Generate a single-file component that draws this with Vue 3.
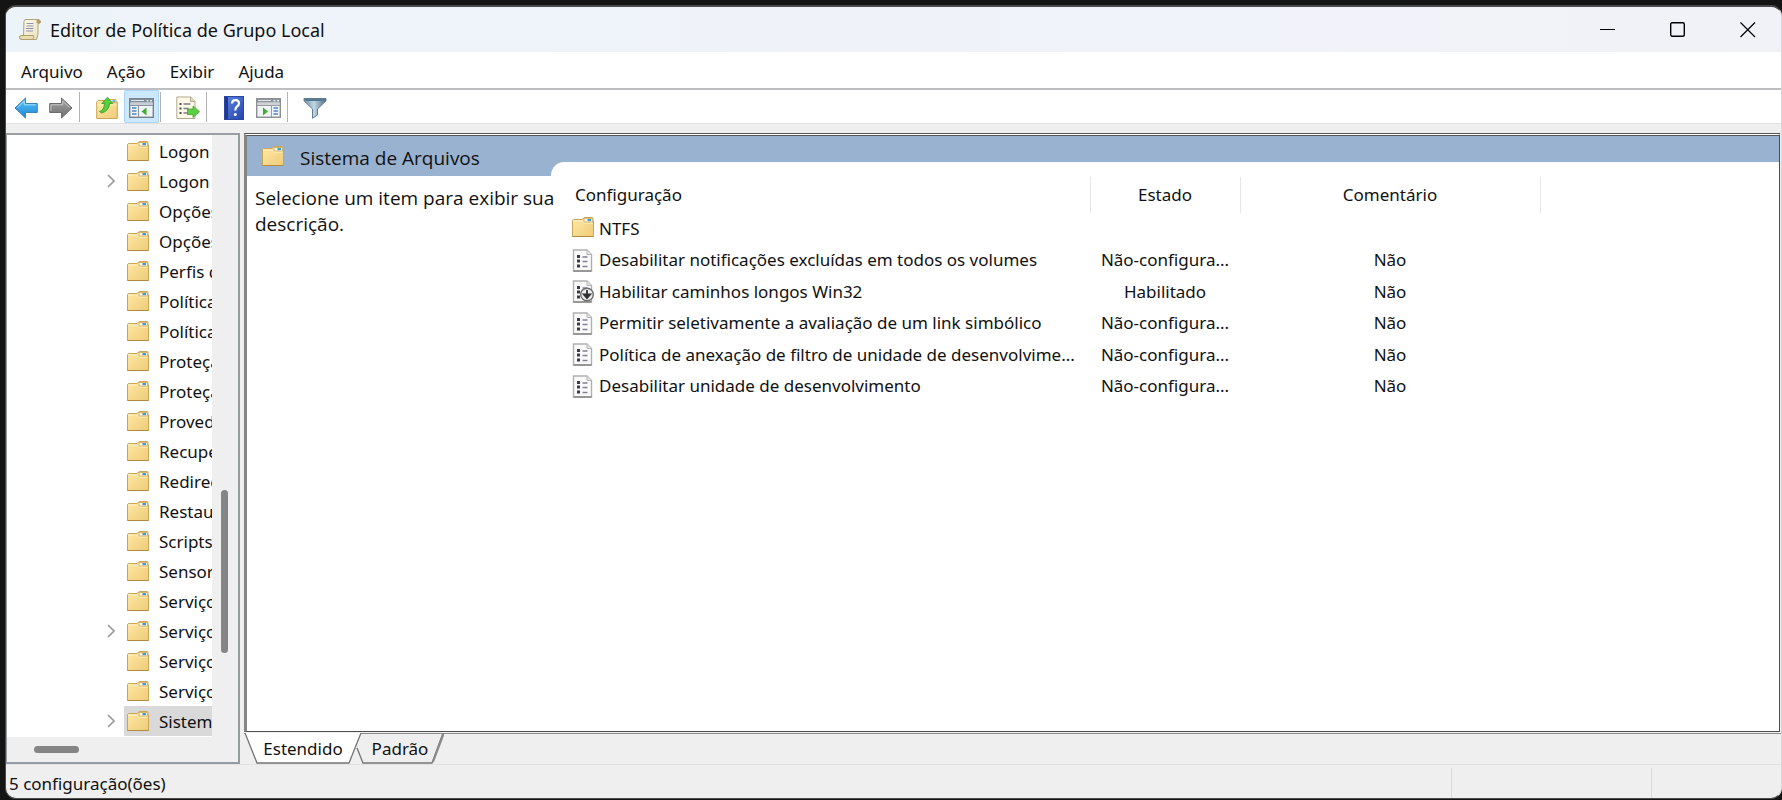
<script setup>
import { ref } from 'vue'

const menus = ['Arquivo', 'Ação', 'Exibir', 'Ajuda']

const tree = [
  { label: 'Logon' },
  { label: 'Logon', open: true },
  { label: 'Opções' },
  { label: 'Opções' },
  { label: 'Perfis de' },
  { label: 'Políticas' },
  { label: 'Políticas' },
  { label: 'Proteção' },
  { label: 'Proteção' },
  { label: 'Provedor' },
  { label: 'Recuperação' },
  { label: 'Redirecionar' },
  { label: 'Restauração' },
  { label: 'Scripts' },
  { label: 'Sensores' },
  { label: 'Serviço' },
  { label: 'Serviço', open: true },
  { label: 'Serviço' },
  { label: 'Serviço' },
  { label: 'Sistema', open: true }
]
const selected = ref(19)

const settings = [
  { name: 'NTFS', icon: 'folder', state: '', comment: '' },
  { name: 'Desabilitar notificações excluídas em todos os volumes', icon: 'page', state: 'Não-configura...', comment: 'Não' },
  { name: 'Habilitar caminhos longos Win32', icon: 'enabled', state: 'Habilitado', comment: 'Não' },
  { name: 'Permitir seletivamente a avaliação de um link simbólico', icon: 'page', state: 'Não-configura...', comment: 'Não' },
  { name: 'Política de anexação de filtro de unidade de desenvolvime...', icon: 'page', state: 'Não-configura...', comment: 'Não' },
  { name: 'Desabilitar unidade de desenvolvimento', icon: 'page', state: 'Não-configura...', comment: 'Não' }
]
</script>

<template>
  <div class="desktop">
    <svg class="defs" width="0" height="0" aria-hidden="true">
      <defs>
        <linearGradient id="gFolder" x1="0" y1="0" x2="1" y2="1">
          <stop offset="0" stop-color="#ffe9a6" /><stop offset="1" stop-color="#efcb78" />
        </linearGradient>
        <linearGradient id="gBlue" x1="0" y1="0" x2="0" y2="1">
          <stop offset="0" stop-color="#5cc4f5" /><stop offset="1" stop-color="#1c86d6" />
        </linearGradient>
        <linearGradient id="gGray" x1="0" y1="0" x2="0" y2="1">
          <stop offset="0" stop-color="#a4a4a4" /><stop offset="1" stop-color="#6f6f6f" />
        </linearGradient>
        <linearGradient id="gHelp" x1="0" y1="0" x2="1" y2="1">
          <stop offset="0" stop-color="#5f86e0" /><stop offset="1" stop-color="#2343ad" />
        </linearGradient>
        <linearGradient id="gFunnel" x1="0" y1="0" x2="1" y2="0">
          <stop offset="0" stop-color="#6d8ea5" /><stop offset="0.45" stop-color="#c3d6e2" /><stop offset="1" stop-color="#4d6d86" />
        </linearGradient>
        <linearGradient id="gPaper" x1="0" y1="0" x2="1" y2="1">
          <stop offset="0" stop-color="#fffdf4" /><stop offset="1" stop-color="#e9deb8" />
        </linearGradient>
        <symbol id="folder" viewBox="0 0 22 20">
          <path d="M.5 19.500V3.500L1.500 2.500h8.500l1.500-1.500Q12 .5 13 .5h7q1 0 1 1V4h.5v15.500z" fill="url(#gFolder)" stroke="#c9a558" />
          <path d="M1.500 4h8.500l1.500 2h9" fill="none" stroke="#fff1c2" />
          <rect x="12" y="1.500" width="8.500" height="3.500" fill="#fdf6df" stroke="#d0ac5e" stroke-width=".8" />
          <rect x="15.500" y="2" width="3.500" height="2.200" fill="#3f9be0" />
          <path d="M.5 19.500h21" stroke="#b08b40" />
        </symbol>
        <symbol id="page" viewBox="0 0 22 23">
          <path d="M1.500 1h13.500l4.500 4.500V22h-18z" fill="#fafafa" stroke="#b0b0b0" stroke-width="1.400" />
          <path d="M15 1v4.500h4.500" fill="#e4e4e4" stroke="#b5b5b5" />
          <path d="M1.500 22h18" stroke="#858585" stroke-width="1.400" />
          <path d="M5 6h3v3H5zM5 10.500h3v3H5zM5 15.500h3v3H5z" fill="#3c3849" />
          <path d="M10.500 8h5M10.500 12.500h5M10.500 17.500h5" stroke="#837f9c" stroke-width="1.400" />
        </symbol>
        <symbol id="enabled" viewBox="0 0 22 23">
          <use href="#page" width="22" height="23" />
          <circle cx="15" cy="14.500" r="6.300" fill="#ececec" stroke="#6b6b6b" stroke-width="1.400" />
          <path d="M15 10v7M11.800 14.300l3.200 3.700 3.200-3.700z" fill="#303030" stroke="#303030" stroke-width="1.800" />
        </symbol>
      </defs>
    </svg>

    <div class="window">
      <header class="titlebar">
        <svg class="scroll" width="24" height="24" viewBox="0 0 24 24" aria-hidden="true">
          <path d="M6 3.500Q6 1.500 8 1.500h12q2.500 0 2.500 2.500 0 1.500-2.500 1.500v11l-1.500 5H4Q1.500 21.500 1.500 19.500T4 17.500h1.500z" fill="url(#gPaper)" stroke="#b0a278" />
          <path d="M18.500 3q-.5 3 1.500 2.500 2.500 0 2.500-1.500T20.500 1.500Q18.500 1.500 18.500 3z" fill="#b99c62" />
          <path d="M4 17.500h11.500q1 2-1 4H4q-2.500 0-2.500-2t2.500-2z" fill="#e9dcae" stroke="#b19f6b" />
          <path d="M8.500 5.500h7M8.500 8h7M8 10.500h7.500M8 13h7" stroke="#8f93ad" stroke-width="1.200" />
        </svg>
        <h1>Editor de Política de Grupo Local</h1>
        <div class="controls">
          <button aria-label="Minimizar"><svg width="16" height="16" viewBox="0 0 16 16"><path d="M0 7.500h15" stroke="#000" /></svg></button>
          <button aria-label="Maximizar"><svg width="16" height="16" viewBox="0 0 16 16"><rect x=".7" y=".7" width="13.600" height="13.600" rx="1.500" fill="none" stroke="#000" stroke-width="1.400" /></svg></button>
          <button aria-label="Fechar"><svg width="16" height="16" viewBox="0 0 16 16"><path d="M.5.5l14.500 14.500M15 .5L.5 15" stroke="#000" stroke-width="1.200" /></svg></button>
        </div>
      </header>

      <nav class="menubar" aria-label="Menu">
        <button v-for="m in menus" :key="m">{{ m }}</button>
      </nav>

      <div class="toolbar" role="toolbar" aria-label="Ferramentas">
        <button aria-label="Voltar">
          <svg width="24" height="22" viewBox="0 0 24 22"><path d="M1 11L11.500 1v5.500h11.800v9H11.500V21z" fill="url(#gBlue)" stroke="#3a83bd" stroke-linejoin="round" /><path d="M3.500 10.500l6.800-6.300v3.600h11.500" fill="none" stroke="#a6e0fb" /></svg>
        </button>
        <button aria-label="Avançar">
          <svg width="24" height="22" viewBox="0 0 24 22"><path d="M23 11L12.500 1v5.500H.7v9h11.800V21z" fill="url(#gGray)" stroke="#6c6c6c" stroke-linejoin="round" /><path d="M2 14V7.800h11.700V4.200l6.800 6.300" fill="none" stroke="#c4c4c4" /></svg>
        </button>
        <span class="sep"></span>
        <button aria-label="Um nível acima">
          <svg width="22" height="24" viewBox="0 0 22 24"><path d="M.7 22.500V6L2 4.500h7L10.500 6h10.800v16.500z" fill="url(#gFolder)" stroke="#c9a558" /><path d="M1.500 9h19" stroke="#fff0bd" /><path d="M14 3.500h6V6h-6z" fill="#fff" stroke="#d0ac5e" /><path d="M16.500 4.200h2.500v1.500h-2.500z" fill="#3f9be0" /><path d="M3.500 15.500q4.500-1 5-8H5.800L11.500 1.200l5.200 6.300h-3q-.8 7.500-8.200 9.500z" fill="#55cf3a" stroke="#319a26" stroke-width=".8" /></svg>
        </button>
        <button class="active" aria-label="Mostrar árvore" aria-pressed="true">
          <svg width="25" height="20" viewBox="0 0 25 20"><rect x=".7" y=".7" width="23.600" height="18.600" fill="#f1f4f6" stroke="#76818b" stroke-width="1.400" /><path d="M1 1h23v3.500H1z" fill="#818d99" /><path d="M17.500 2h2v1.500h-2zM21 2h2v1.500h-2zM2 2h13v1H2z" fill="#dfe6ec" /><path d="M1 6h23" stroke="#b9c2ca" stroke-width="1.500" /><path d="M9.500 7.500V19M1 7.500h23" stroke="#8a959f" /><path d="M3 10h4.500M3 13h4.500M3 16h4.500" stroke="#4a86c8" stroke-width="1.500" /><path d="M17.500 9.500v8L12.500 13.500z" fill="#3fae2a" /></svg>
        </button>
        <span class="sep"></span>
        <button aria-label="Exportar lista">
          <svg width="24" height="24" viewBox="0 0 24 24"><path d="M.8 1h14l4.200 4.500V22.500H.8z" fill="#fdf9e6" stroke="#b1a98d" /><path d="M14.500 1v4.500H19" fill="#e6dcb8" stroke="#b1a98d" /><path d="M3.500 7h2v2h-2zM3.500 11.500h2v2h-2zM3.500 16h2v2h-2z" fill="#4b4b55" /><path d="M7.500 8h7M7.500 12.500h5M7.500 17h6" stroke="#7d7d88" stroke-width="1.300" /><path d="M11.500 13H17v-3l6.500 5.700-6.500 5.800v-3h-5.500z" fill="#5cd043" stroke="#3fa32d" stroke-width=".8" /></svg>
        </button>
        <span class="sep"></span>
        <button aria-label="Ajuda">
          <svg width="20" height="24" viewBox="0 0 20 24"><rect x=".5" y=".5" width="19" height="23" fill="url(#gHelp)" stroke="#2b479f" /><path d="M1 1h3v22H1z" fill="#20388f" /><path d="M8 7.500q.2-3.300 3.500-3.300t3.500 3q0 2-2 3.300-1.700 1.200-1.700 4" fill="none" stroke="#fff" stroke-width="2.200" /><circle cx="11.300" cy="18.500" r="1.500" fill="#fff" /></svg>
        </button>
        <button aria-label="Mostrar painel de ações">
          <svg width="25" height="20" viewBox="0 0 25 20"><rect x=".7" y=".7" width="23.600" height="18.600" fill="#f1f4f6" stroke="#8c8f94" stroke-width="1.400" /><path d="M1 1h23v3.500H1z" fill="#8d939a" /><path d="M17.500 2h2v1.500h-2zM21 2h2v1.500h-2zM2 2h13v1H2z" fill="#e6e9ec" /><path d="M1 6h23" stroke="#c3c7cb" stroke-width="1.500" /><path d="M15.500 7.500V19M1 7.500h23" stroke="#989da2" /><path d="M17.500 10H22M17.500 13H22M17.500 16H22" stroke="#4a86c8" stroke-width="1.500" /><path d="M7 9.500v8L12 13.500z" fill="#3fae2a" /></svg>
        </button>
        <span class="sep"></span>
        <button aria-label="Filtro">
          <svg width="24" height="22" viewBox="0 0 24 22"><path d="M1 1.500h22v2.300L14.500 12v6L9.500 21.300V12L1 3.800z" fill="url(#gFunnel)" stroke="#5f7d93" stroke-linejoin="round" /><path d="M1.500 2h21L21 4H3z" fill="#54788f" /></svg>
        </button>
      </div>

      <main class="body">
        <aside class="side">
          <div class="tree-row">
            <ul class="tree" role="tree" aria-label="Árvore do console">
              <li v-for="(n, i) in tree" :key="i" role="treeitem" :aria-selected="selected === i">
                <svg v-if="n.open" class="chev" width="8" height="14" viewBox="0 0 8 14"><path d="M1 1l6 6-6 6" fill="none" stroke="#999" stroke-width="1.600" /></svg>
                <span v-else class="chev"></span>
                <button :class="{ on: selected === i }" @click="selected = i">
                  <svg class="fold" width="22" height="20"><use href="#folder" /></svg>
                  <span>{{ n.label }}</span>
                </button>
              </li>
            </ul>
            <div class="vscroll"><div class="vthumb"></div></div>
          </div>
          <div class="hscroll"><div class="hthumb"></div></div>
        </aside>

        <section class="main">
          <div class="pane">
            <div class="info">
              <h2><svg width="22" height="20"><use href="#folder" /></svg><span>Sistema de Arquivos</span></h2>
              <p>Selecione um item para exibir sua descrição.</p>
            </div>
            <div class="listwrap">
              <div class="list">
                <table>
                  <colgroup><col class="c1" /><col class="c2" /><col class="c3" /></colgroup>
                  <thead>
                    <tr><th scope="col">Configuração</th><th scope="col">Estado</th><th scope="col">Comentário</th></tr>
                  </thead>
                  <tbody>
                    <tr v-for="s in settings" :key="s.name">
                      <td>
                        <div class="name">
                          <svg v-if="s.icon === 'folder'" class="fold" width="22" height="20"><use href="#folder" /></svg>
                          <svg v-else width="22" height="23"><use :href="'#' + s.icon" /></svg>
                          <span>{{ s.name }}</span>
                        </div>
                      </td>
                      <td>{{ s.state }}</td>
                      <td>{{ s.comment }}</td>
                    </tr>
                  </tbody>
                </table>
              </div>
            </div>
          </div>
          <div class="tabs" role="tablist">
            <button class="tab first" role="tab" aria-selected="true">
              <svg width="118" height="31" viewBox="0 0 118 31"><path d="M1 0l12 30h92L117 0z" fill="#fff" /><path d="M1 0l12 30h92L117 0" fill="none" stroke="#757575" stroke-width="1.300" /></svg>
              <span>Estendido</span>
            </button>
            <button class="tab second" role="tab" aria-selected="false">
              <svg width="88" height="31" viewBox="0 0 88 31"><path d="M1 15l6 15h69L87 0" fill="none" stroke="#757575" stroke-width="1.300" /><path d="M77 29L88 0" stroke="#8b8b8b" stroke-width="2" /></svg>
              <span>Padrão</span>
            </button>
          </div>
        </section>
      </main>

      <footer class="status">
        <span class="msg">5 configuração(ões)</span><span class="cell wide"></span><span class="cell"></span>
      </footer>
    </div>
  </div>
</template>

<style>
body {
  margin: 0;
  background: #141414;
}
</style>

<style scoped>
.desktop {
  box-sizing: border-box;
  height: 100vh;
  padding: 5px 0 1px 5px;
  background: #141414;
  font-family: "Noto Sans", "Open Sans", sans-serif;
  font-size: 17px;
  line-height: 24px;
  color: #111;
}
.defs { position: absolute; }
button {
  font: inherit;
  color: inherit;
  background: none;
  border: 0;
  padding: 0;
  margin: 0;
}
svg { display: block; flex: none; }
.window {
  box-sizing: border-box;
  height: 100%;
  display: flex;
  flex-direction: column;
  background: #efefef;
  border: 1px solid #4a4a4a;
  border-top-width: 2px;
  border-right-color: #d8d8d8;
  border-radius: 11px;
  overflow: hidden;
}
.titlebar {
  flex: none;
  height: 45px;
  display: flex;
  align-items: center;
  background: linear-gradient(90deg, #edf4f9, #eff3f9 50%, #f1f2f8);
}
.scroll { margin: 0 8px 0 12px; }
.titlebar h1 {
  margin: 0;
  font-size: 18px;
  font-weight: 400;
  flex: 1;
}
.controls { display: flex; margin-right: -2px; }
.controls button {
  width: 70px;
  height: 44px;
  display: flex;
  align-items: center;
  justify-content: center;
}
.menubar {
  flex: none;
  height: 36px;
  display: flex;
  align-items: center;
  gap: 24px;
  padding: 3px 15px 0;
  box-sizing: border-box;
  background: #fff;
}
.toolbar {
  flex: none;
  height: 36px;
  box-sizing: border-box;
  display: flex;
  align-items: center;
  padding: 0 2px;
  background: #fff;
  border-top: 2px solid #bdbdc2;
  border-bottom: 1px solid #e2e2e2;
}
.toolbar button {
  width: 35px;
  height: 33px;
  box-sizing: border-box;
  padding-top: 3px;
  display: flex;
  align-items: center;
  justify-content: center;
}
.toolbar .active {
  background: #cce8ff;
  box-shadow: inset 0 0 0 1px #a9d6f8;
  border-radius: 2px;
}
.sep {
  width: 1px;
  height: 30px;
  margin: 0 9px 0 1px;
  background: #b4b4b4;
}
.body {
  flex: 1;
  min-height: 0;
  display: flex;
  gap: 4px;
  padding-top: 9px;
}
.side {
  flex: none;
  width: 234px;
  box-sizing: border-box;
  display: flex;
  flex-direction: column;
  background: #efefef;
  border: 2px solid #949ba3;
  border-left-width: 1px;
  border-top-color: #9a9fa6;
}
.tree-row {
  flex: 1;
  min-height: 0;
  display: flex;
}
.tree {
  flex: 1;
  min-width: 0;
  margin: 0;
  padding: 1px 0 0;
  list-style: none;
  background: #fff;
  overflow: hidden;
}
.tree li {
  display: flex;
  align-items: center;
  height: 30px;
}
.chev {
  width: 8px;
  margin: 0 9px 0 100px;
  flex: none;
}
.tree button {
  flex: 1;
  min-width: 0;
  height: 30px;
  box-sizing: border-box;
  display: flex;
  align-items: center;
  gap: 10px;
  padding: 2px 0 0 3px;
  white-space: nowrap;
  overflow: hidden;
}
.tree button.on { background: #d9d9d9; }
.fold { margin-bottom: 3px; }
.vscroll {
  width: 26px;
  box-sizing: border-box;
  padding-right: 1px;
  display: flex;
  justify-content: center;
  align-items: flex-end;
}
.vthumb {
  width: 7px;
  height: 27%;
  margin-bottom: 84px;
  border-radius: 4px;
  background: #858585;
}
.hscroll {
  flex: none;
  height: 25px;
  display: flex;
  align-items: center;
}
.hthumb {
  width: 45px;
  height: 7px;
  margin-left: 27px;
  border-radius: 4px;
  background: #858585;
}
.main {
  flex: 1;
  min-width: 0;
  display: flex;
  flex-direction: column;
}
.pane {
  flex: 1;
  min-height: 0;
  display: flex;
  background: #fff;
  border: 1px solid #4d4d4d;
  border-left: 3px solid #858585;
  border-top: 3px double #555;
  margin-right: 1px;
}
.info {
  flex: none;
  width: 304px;
  font-family: "Open Sans", "Noto Sans", sans-serif;
}
.info h2 {
  display: flex;
  align-items: center;
  gap: 16px;
  height: 40px;
  box-sizing: border-box;
  margin: 0;
  padding: 4px 0 0 15px;
  background: #99b2d0;
  font-size: 19px;
  font-weight: 400;
}
.info h2 svg { margin-bottom: 5px; }
.info p {
  position: relative;
  margin: 0 -8px 0 0;
  padding: 9px 0 0 8px;
  font-size: 19px;
  line-height: 26px;
}
.listwrap {
  flex: 1;
  min-width: 0;
  background: linear-gradient(#99b2d0 40px, #fff 40px);
}
.list {
  margin-top: 26px;
  padding: 15px 0 0 13px;
  background: #fff;
  border-top-left-radius: 13px 14px;
}
table {
  width: 976px;
  table-layout: fixed;
  border-collapse: collapse;
}
.c1 { width: 526px; }
.c2 { width: 150px; }
.c3 { width: 300px; }
th {
  height: 36px;
  padding: 0;
  box-sizing: border-box;
  border-right: 1px solid #e6e6e6;
  font-weight: 400;
}
th:first-child { text-align: left; padding-left: 11px; }
td {
  height: 31px;
  padding: 0;
  text-align: center;
  white-space: nowrap;
}
tr:nth-child(even) td { height: 32px; }
.name {
  display: flex;
  align-items: center;
  gap: 5px;
  padding-left: 8px;
}
.tabs {
  flex: none;
  display: flex;
  margin-top: 1px;
  height: 31px;
  box-sizing: border-box;
  border-top: 1px solid #8c8c8c;
}
.tab {
  position: relative;
  height: 31px;
  margin-top: -1px;
}
.tab svg { position: absolute; left: 0; top: 0; }
.tab span { position: relative; }
.first { width: 118px; }
.second { width: 88px; margin-left: -6px; }
.status {
  flex: none;
  height: 34px;
  box-sizing: border-box;
  display: flex;
  align-items: center;
  border-top: 1px solid #e2e2e2;
}
.msg { flex: 1; padding: 4px 0 0 3px; }
.cell {
  width: 130px;
  height: 30px;
  box-sizing: border-box;
  border-left: 1px solid #d9d9d9;
  margin-top: 3px;
}
.wide { width: 200px; }
</style>
